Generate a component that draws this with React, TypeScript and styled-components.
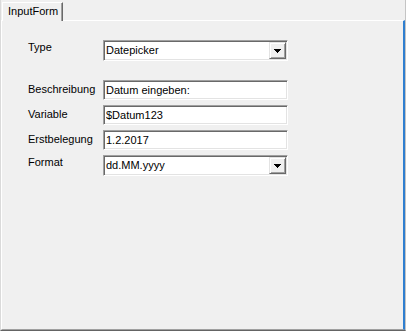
import React from 'react';
import styled, { createGlobalStyle } from "styled-components";

const GlobalStyle = createGlobalStyle`
  html, body {
    margin: 0;
    padding: 0;
    background: #f0f0f0;
  }
  body {
    font-family: "Liberation Sans", Arial, sans-serif;
    font-size: 11px;
    color: #000000;
  }
`;

const Window = styled.div`
  width: 406px;
  height: 331px;
  box-sizing: border-box;
  display: flex;
  flex-direction: column;
  background: #f0f0f0;
  border-left: 1px solid #dadada;
  border-right: 1px solid #c4c4c4;
  border-bottom: 1px solid #646464;
`;

const TabStrip = styled.div`
  height: 20px;
  display: flex;
  align-items: flex-end;
  padding-left: 1px;
`;

const Tab = styled.div`
  position: relative;
  z-index: 1;
  height: 19px;
  margin-bottom: -1px;
  box-sizing: border-box;
  padding: 2px 0 0 5px;
  width: 61px;
  line-height: 13px;
  background: #f0f0f0;
  border-top: 1px solid #ffffff;
  border-left: 1px solid #ffffff;
  border-right: 1px solid #696969;
  box-shadow: inset -1px 0 #a0a0a0;
`;

const Page = styled.div`
  flex: 1;
  box-sizing: border-box;
  border-top: 1px solid #ffffff;
  border-left: 1px solid #ffffff;
  border-right: 2px solid #2f7fd0;
  border-bottom: 1px solid #a0a0a0;
  padding: 19px 0 0 26px;
`;

const Form = styled.div`
  display: flex;
  flex-direction: column;
`;

const Row = styled.div<{ $gap: number }>`
  display: grid;
  grid-template-columns: 75px 185px;
  align-items: start;
  margin-top: ${(p) => p.$gap}px;
`;

const Label = styled.div<{ $offset: number }>`
  padding-top: ${(p) => p.$offset}px;
  line-height: 13px;
  white-space: nowrap;
`;

const sunken = `
  box-sizing: border-box;
  border: 1px solid;
  border-color: #a0a0a0 #ffffff #ffffff #a0a0a0;
  box-shadow: inset 1px 1px #696969, inset -1px -1px #e3e3e3;
  background: #ffffff;
`;

const TextBox = styled.input`
  ${sunken}
  width: 185px;
  height: 20px;
  margin: 0;
  padding: 0 0 0 2px;
  font-family: "Liberation Sans", Arial, sans-serif;
  font-size: 11px;
  color: #000000;
  outline: none;
`;

const Combo = styled.div`
  ${sunken}
  width: 185px;
  height: 21px;
  display: flex;
  padding: 1px;
`;

const ComboText = styled.div`
  flex: 1;
  padding-left: 1px;
  line-height: 17px;
`;

const DropButton = styled.div`
  width: 17px;
  height: 17px;
  box-sizing: border-box;
  display: flex;
  align-items: center;
  justify-content: center;
  background: #f0f0f0;
  border: 1px solid;
  border-color: #e3e3e3 #696969 #696969 #e3e3e3;
  box-shadow: inset 1px 1px #ffffff, inset -1px -1px #a0a0a0;
`;

const Arrow = () => (
  <svg width="7" height="4" viewBox="0 0 7 4" shapeRendering="crispEdges">
    <rect x="0" y="0" width="7" height="1" fill="#000" />
    <rect x="1" y="1" width="5" height="1" fill="#000" />
    <rect x="2" y="2" width="3" height="1" fill="#000" />
    <rect x="3" y="3" width="1" height="1" fill="#000" />
  </svg>
);

const ComboBox = ({ value }: { value: string }) => (
  <Combo>
    <ComboText>{value}</ComboText>
    <DropButton>
      <Arrow />
    </DropButton>
  </Combo>
);

const App = () => {
  return (
    <>
      <GlobalStyle />
      <Window>
        <TabStrip>
          <Tab>InputForm</Tab>
        </TabStrip>
        <Page>
          <Form>
            <Row $gap={0}>
              <Label $offset={1}>Type</Label>
              <ComboBox value="Datepicker" />
            </Row>
            <Row $gap={19}>
              <Label $offset={3}>Beschreibung</Label>
              <TextBox readOnly value="Datum eingeben:" />
            </Row>
            <Row $gap={5}>
              <Label $offset={3}>Variable</Label>
              <TextBox readOnly value="$Datum123" />
            </Row>
            <Row $gap={5}>
              <Label $offset={3}>Erstbelegung</Label>
              <TextBox readOnly value="1.2.2017" />
            </Row>
            <Row $gap={5}>
              <Label $offset={1}>Format</Label>
              <ComboBox value="dd.MM.yyyy" />
            </Row>
          </Form>
        </Page>
      </Window>
    </>
  );
};

export default App;
